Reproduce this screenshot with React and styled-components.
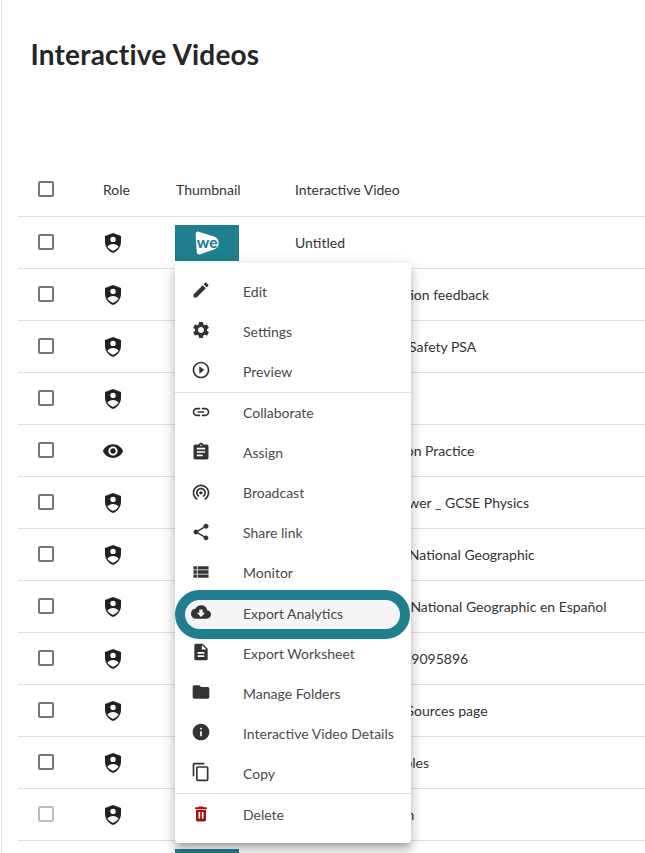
import React from "react";
import styled, { createGlobalStyle } from "styled-components";
import {
  MdEdit, MdSettings, MdPlayCircleOutline, MdLink, MdAssignment, MdWifiTethering, MdShare,
  MdViewList, MdCloudDownload, MdDescription, MdFolder, MdInfo, MdContentCopy, MdVisibility,
} from "react-icons/md";

const Global = createGlobalStyle`
  html, body { margin: 0; padding: 0; background: #fff; }
  body { font-family: "Lato", "Liberation Sans", sans-serif; color: #333; overflow: hidden; }
`;

const Page = styled.div`
  position: relative;
  height: 853px;
  overflow: hidden;
  margin-left: 1px;
  padding-left: 16px;
  border-left: 1px solid #dcdcdc;
`;

const Title = styled.h1`
  margin: 0;
  padding: 37px 0 0 12.5px;
  height: 164px;
  box-sizing: border-box;
  font-size: 28px;
  line-height: 34px;
  font-weight: 700;
  letter-spacing: 0.2px;
  color: #262626;
`;

const Row = styled.div`
  display: grid;
  grid-template-columns: 85px 72px 120px 1fr;
  align-items: center;
  height: ${(p) => (p.$head ? "52px" : "51px")};
  border-bottom: 1px solid #e0e0e0;
  font-size: 14px;
  color: #333;
  white-space: nowrap;
`;

const Check = styled.span`
  display: block;
  box-sizing: border-box;
  width: 16px;
  height: 16px;
  margin: 0 0 2px 20px;
  border: 2px solid ${(p) => (p.$disabled ? "#bdbdbd" : "#757575")};
  border-radius: 2px;
`;

const RoleCell = styled.div`
  display: flex;
  justify-content: center;
  width: 24px;
  margin-left: -2px;
  color: #212121;
`;

const Thumb = styled.div`
  display: flex;
  align-items: center;
  justify-content: center;
  width: 64px;
  height: 36px;
  background: #1f7f8f;
`;

const HeadLabel = styled.span`
  margin-bottom: 1px;
  padding-left: ${(p) => (p.$inset ? "1px" : "0")};
`;

const Menu = styled.div`
  position: absolute;
  left: 173px;
  top: 263.25px;
  width: 236px;
  padding: 8px 0;
  background: #fff;
  border-radius: 4px;
  box-shadow: 0 5px 5px -3px rgba(0, 0, 0, 0.2), 0 8px 10px 1px rgba(0, 0, 0, 0.14),
    0 3px 14px 2px rgba(0, 0, 0, 0.12);
`;

const Item = styled.div`
  position: relative;
  display: flex;
  align-items: center;
  gap: 32px;
  height: 40.1px;
  padding-left: 16px;
  font-size: 14px;
  color: #4a4a4a;
  white-space: nowrap;
  &::before {
    content: ${(p) => (p.$ring ? '""' : "none")};
    position: absolute;
    inset: -3.5px 1px -6px 0;
    box-sizing: border-box;
    background: #f5f5f5;
    border: 10px solid #1f7f8f;
    border-radius: 25px;
  }
`;

const ItemIcon = styled.span`
  position: relative;
  top: -1px;
  display: flex;
  width: 20px;
  height: 20px;
  font-size: 20px;
  color: #333;
`;

const ItemLabel = styled.span`
  position: relative;
`;

const Divider = styled.div`
  height: 1px;
  background: #e0e0e0;
`;

const ShieldPerson = () => (
  <svg width="24" height="24" viewBox="0 0 24 24" fill="none">
    <path d="M12 2 4 5v5.8c0 5 3.400 9.800 8 11.200 4.600-1.400 8-6.200 8-11.200V5z" fill="#212121" />
    <circle cx="12" cy="8.400" r="2.700" fill="#fff" />
    <path d="M6.400 15.600c1.400-1.800 3.400-2.700 5.600-2.700s4.200.9 5.600 2.700c-1.200 2-3.100 3.500-5.600 4.300-2.500-.8-4.400-2.300-5.600-4.300z" fill="#fff" />
  </svg>
);

const TrashIcon = () => (
  <svg width="20" height="20" viewBox="0 0 24 24">
    <path d="M6 19c0 1.100.9 2 2 2h8c1.100 0 2-.9 2-2V7H6v12zM19 4h-3.500l-1-1h-5l-1 1H5v2h14V4z" fill="#a80f0f" />
    <rect x="9" y="9.500" width="2" height="8" fill="#fff" />
    <rect x="13" y="9.500" width="2" height="8" fill="#fff" />
  </svg>
);

const WeLogo = () => (
  <svg width="24" height="24" viewBox="0 0 24 24">
    <path d="M.6 3C.6 1.300 2 .2 3.700.7L19 5.500c3 1 4.700 3.500 4.700 6.500s-1.700 5.500-4.700 6.500L5.300 23.200c-1.800.6-3.400-.4-3.500-2z" fill="#fff" />
    <text x="12.200" y="16.800" textAnchor="middle" fontFamily="Lato, sans-serif" fontWeight="900" fontSize="15.500" fill="#1f7f8f">we</text>
  </svg>
);

const rows = [
  "Untitled",
  "Multi-choice question feedback",
  "New Rail and Bike Safety PSA",
  "Climate",
  "Italian Pronunciation Practice",
  "Wind and Solar Power _ GCSE Physics",
  "Exploring Mars by National Geographic",
  "Explorar Océanos: National Geographic en Español",
  "Interactive Video 19095896",
  "Primary and Main Sources page",
  "Comparing Ten Fables",
  "Civil Rights Mission",
  "",
];

const menuGroups = [
  [
    ["Edit", <MdEdit />],
    ["Settings", <MdSettings />],
    ["Preview", <MdPlayCircleOutline />],
  ],
  [
    ["Collaborate", <MdLink />],
    ["Assign", <MdAssignment />],
    ["Broadcast", <MdWifiTethering />],
    ["Share link", <MdShare />],
    ["Monitor", <MdViewList />],
    ["Export Analytics", <MdCloudDownload />, true],
    ["Export Worksheet", <MdDescription />],
    ["Manage Folders", <MdFolder />],
    ["Interactive Video Details", <MdInfo />],
    ["Copy", <MdContentCopy />],
  ],
  [["Delete", <TrashIcon />]],
];

export default function App() {
  return (
    <>
      <Global />
      <Page>
        <Title>Interactive Videos</Title>
        <Row $head>
          <Check />
          <HeadLabel>Role</HeadLabel>
          <HeadLabel $inset>Thumbnail</HeadLabel>
          <HeadLabel>Interactive Video</HeadLabel>
        </Row>
        {rows.map((name, i) => (
          <Row key={i}>
            <Check $disabled={i === 11} />
            <RoleCell>{i === 4 ? <MdVisibility size={22} /> : <ShieldPerson />}</RoleCell>
            <Thumb>{name && <WeLogo />}</Thumb>
            <span>{name}</span>
          </Row>
        ))}
        <Menu>
          {menuGroups.map((g, gi) => (
            <React.Fragment key={gi}>
              {gi > 0 && <Divider />}
              {g.map(([label, icon, ring]) => (
                <Item key={label} $ring={ring}>
                  <ItemIcon>{icon}</ItemIcon>
                  <ItemLabel>{label}</ItemLabel>
                </Item>
              ))}
            </React.Fragment>
          ))}
        </Menu>
      </Page>
    </>
  );
}
